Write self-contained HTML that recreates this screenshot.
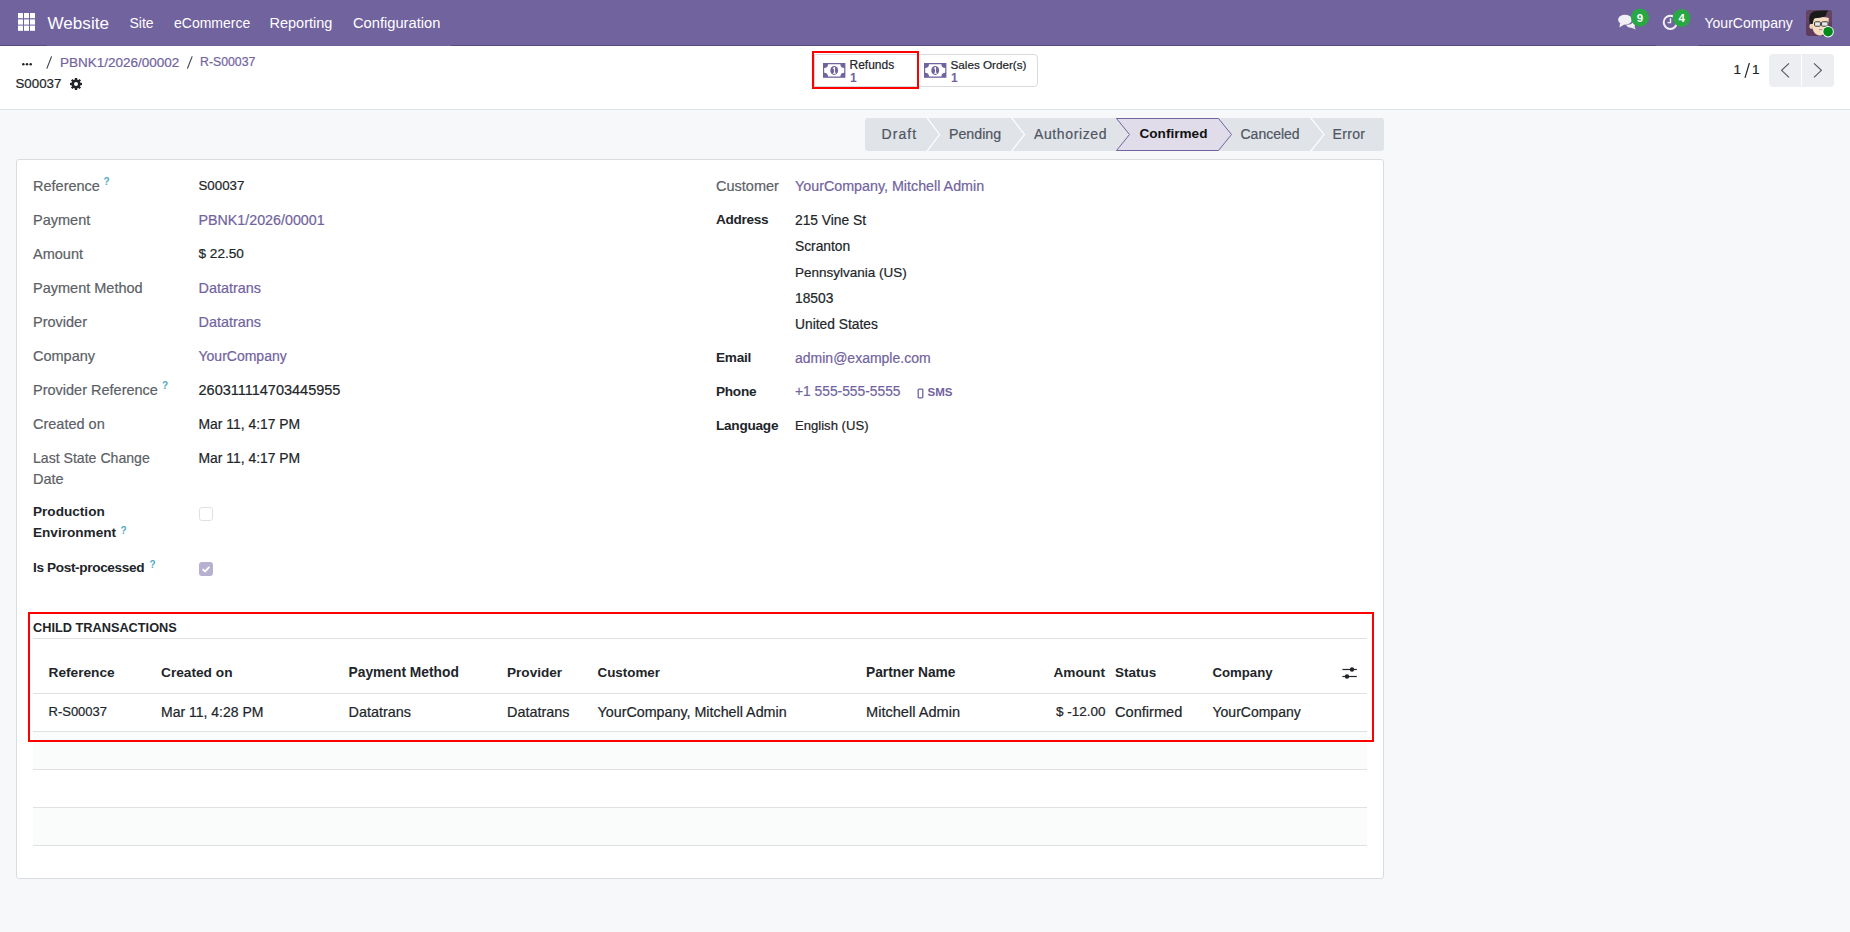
<!DOCTYPE html>
<html><head><meta charset="utf-8">
<style>
*{box-sizing:border-box;margin:0;padding:0}
html,body{width:1850px;height:932px;overflow:hidden;background:#f7f8fa;font-family:"Liberation Sans",sans-serif;color:#212529}
.a{position:absolute}
.t{position:absolute;white-space:nowrap;line-height:1;font-size:14px;-webkit-text-stroke:0.2px currentColor}
.b{-webkit-text-stroke:0}
.b{font-weight:700}
.lbl{color:#5c5f66;font-size:14.5px}
.val{color:#212529}
.lnk{color:#71639e}
.nav{position:absolute;left:0;top:0;width:1850px;height:46px;background:#71639e}
.nb{position:absolute;top:45px;height:1px;background:#584b82}
.nav .t{color:#fff;-webkit-text-stroke:0}
.cp{position:absolute;left:0;top:46px;width:1850px;height:64px;background:#fff;border-bottom:1px solid #dde1e5}
.sb{position:absolute;top:54px;height:33px;background:#fff;border:1px solid #d8dadd}
.q{position:absolute;color:#52a8c8;font-size:10px;line-height:1;font-weight:700}
.sheet{position:absolute;left:16px;top:159px;width:1368px;height:720px;background:#fff;border:1px solid #d9dde2;border-radius:3px}
.hl{position:absolute;left:33px;width:1334px;height:1px;background:#dfe1e5}
</style></head>
<body>
<!-- NAVBAR -->
<div class="nav">
  <div class="nb" style="left:0;width:47px"></div><div class="nb" style="left:451px;width:1205px"></div><div class="nb" style="left:1698px;width:102px"></div>
  <svg class="a" style="left:0;top:0" width="60" height="46">
    <g fill="#fff">
      <rect x="18" y="13" width="5" height="5.2"/><rect x="24" y="13" width="5" height="5.2"/><rect x="30" y="13" width="5" height="5.2"/>
      <rect x="18" y="19.4" width="5" height="5.2"/><rect x="24" y="19.4" width="5" height="5.2"/><rect x="30" y="19.4" width="5" height="5.2"/>
      <rect x="18" y="25.6" width="5" height="5.2"/><rect x="24" y="25.6" width="5" height="5.2"/><rect x="30" y="25.6" width="5" height="5.2"/>
    </g>
  </svg>
  <div class="t" style="left:47.5px;top:15px;font-size:17.1px">Website</div>
  <div class="t" style="left:129.5px;top:16px">Site</div>
  <div class="t" style="left:174px;top:16px">eCommerce</div>
  <div class="t" style="left:269.5px;top:16px;font-size:14.5px">Reporting</div>
  <div class="t" style="left:353px;top:16px;font-size:14.7px">Configuration</div>

  <!-- chat icon -->
  <svg class="a" style="left:1610px;top:0" width="90" height="46">
    <g fill="#f1eef6">
      <ellipse cx="15" cy="19.8" rx="6.9" ry="5"/>
      <path d="M10 23 L9.5 27.5 L14.5 24.2 Z"/>
      <path d="M16 24.8 Q21 25.2 23 22.5 Q25.8 24.5 24.5 27 L25.8 29.4 L21.5 27.8 Q17.5 28 16 24.8 Z"/>
    </g>
    <circle cx="30" cy="17.6" r="9.1" fill="#29a745"/>
    <text x="29.9" y="21.6" fill="#fff" font-family="Liberation Sans" font-size="11.5" font-weight="700" text-anchor="middle">9</text>
    <!-- clock -->
    <circle cx="60.3" cy="22.3" r="6.6" fill="none" stroke="#f3f0f7" stroke-width="2"/>
    <path d="M60.5 18.2 V22.6 H57.6" fill="none" stroke="#f3f0f7" stroke-width="1.4"/>
    <circle cx="71.6" cy="18" r="8.9" fill="#29a745"/>
    <text x="71.6" y="22" fill="#fff" font-family="Liberation Sans" font-size="11.5" font-weight="700" text-anchor="middle">4</text>
  </svg>
  <div class="t" style="left:1704.5px;top:16px;font-size:14px">YourCompany</div>
  <!-- avatar -->
  <svg class="a" style="left:1800px;top:4px" width="46" height="40">
    <defs><clipPath id="av"><rect x="6" y="6" width="26" height="26" rx="3"/></clipPath></defs>
    <rect x="6" y="6" width="26" height="26" rx="3" fill="#5e3c5b"/>
    <g clip-path="url(#av)">
      <rect x="6" y="6" width="26" height="13" fill="#6a4767" opacity="0.6"/>
      <path d="M11.8 15 Q11.2 25 14.8 29.2 Q17.8 32 21 31.4 Q26.2 29.5 28.2 23 L28.8 14 Q24 12.5 18 13.2 Z" fill="#f7dcc2"/>
      <ellipse cx="11.2" cy="22.3" rx="1.8" ry="2.6" fill="#f2d3b9"/>
      <path d="M9.6 19.8 Q8.4 12 11 9.2 Q14 6.4 19 6.8 Q24 6.3 28.2 6.5 Q27.6 8 26.6 8.6 Q27 10.6 25 12.4 Q20 14 14.6 14.2 Q12.9 15.8 12.7 20 Z" fill="#1a1a1a"/>
      <rect x="14.6" y="17.8" width="5.8" height="4.4" rx="0.8" fill="#e9e9e9" stroke="#3a3a3a" stroke-width="1"/>
      <rect x="21.6" y="17.8" width="6.4" height="4.4" rx="0.8" fill="#e9e9e9" stroke="#3a3a3a" stroke-width="1"/>
      <path d="M19 25.6 H22.4" stroke="#b98080" stroke-width="0.9"/>
    </g>
    <circle cx="28.1" cy="27.7" r="5.7" fill="#fff"/>
    <circle cx="28.1" cy="27.7" r="4.8" fill="#008a1a"/>
  </svg>
</div>

<!-- CONTROL PANEL -->
<div class="cp">
</div>
<svg class="a" style="left:18px;top:58px" width="20" height="10"><g fill="#212529"><circle cx="5.3" cy="6.2" r="1.25"/><circle cx="9" cy="6.2" r="1.25"/><circle cx="12.7" cy="6.2" r="1.25"/></g></svg>
<svg class="a" style="left:44px;top:54px" width="12" height="18"><path d="M2.8 14.6 L7.6 2.4" stroke="#3d4250" stroke-width="1.15"/></svg>
<div class="t lnk" style="left:60px;top:56px;font-size:13.5px">PBNK1/2026/00002</div>
<svg class="a" style="left:185px;top:54px" width="12" height="18"><path d="M2.4 14.6 L7.2 2.4" stroke="#3d4250" stroke-width="1.15"/></svg>
<div class="t lnk" style="left:200px;top:56px;font-size:12.3px">R-S00037</div>
<div class="t val" style="left:15.5px;top:77px;font-size:13.3px">S00037</div>
<svg class="a" style="left:68px;top:76px" width="16" height="16" viewBox="0 0 16 16">
  <g fill="#212529">
    <circle cx="8" cy="8" r="4.6"/>
    <rect x="6.8" y="2" width="2.4" height="12"/>
    <rect x="2" y="6.8" width="12" height="2.4"/>
    <rect x="6.8" y="2" width="2.4" height="12" transform="rotate(45 8 8)"/>
    <rect x="6.8" y="2" width="2.4" height="12" transform="rotate(-45 8 8)"/>
  </g>
  <circle cx="8" cy="8" r="2" fill="#fff"/>
</svg>

<!-- stat buttons -->
<div class="sb" style="left:917px;width:121px;border-radius:0 4px 4px 0"></div>
<div class="sb" style="left:814px;width:104px"></div>
<svg class="a" style="left:823px;top:63px" width="23" height="15" viewBox="0 0 23 15">
  <rect x="0" y="0" width="22.4" height="14.8" fill="#71639e"/>
  <path d="M5 1.2 H17.4 A3.8 3.8 0 0 0 21.2 5 V9.8 A3.8 3.8 0 0 0 17.4 13.6 H5 A3.8 3.8 0 0 0 1.2 9.8 V5 A3.8 3.8 0 0 0 5 1.2 Z" fill="#fff"/>
  <ellipse cx="11.2" cy="7.4" rx="3.9" ry="4.5" fill="#71639e"/>
  <path d="M9.9 5.4 L11.5 4.6 V9.9 M10 10.2 H13" stroke="#fff" stroke-width="1.1" fill="none"/>
</svg>
<div class="t val" style="left:849.5px;top:59px;font-size:12px">Refunds</div>
<div class="t lnk b" style="left:850px;top:72px;font-size:12px">1</div>
<svg class="a" style="left:924px;top:63px" width="23" height="15" viewBox="0 0 23 15">
  <rect x="0" y="0" width="22.4" height="14.8" fill="#71639e"/>
  <path d="M5 1.2 H17.4 A3.8 3.8 0 0 0 21.2 5 V9.8 A3.8 3.8 0 0 0 17.4 13.6 H5 A3.8 3.8 0 0 0 1.2 9.8 V5 A3.8 3.8 0 0 0 5 1.2 Z" fill="#fff"/>
  <ellipse cx="11.2" cy="7.4" rx="3.9" ry="4.5" fill="#71639e"/>
  <path d="M9.9 5.4 L11.5 4.6 V9.9 M10 10.2 H13" stroke="#fff" stroke-width="1.1" fill="none"/>
</svg>
<div class="t val" style="left:950.5px;top:58.5px;font-size:11.7px">Sales Order(s)</div>
<div class="t lnk b" style="left:951px;top:72px;font-size:12px">1</div>
<div class="a" style="left:812px;top:51px;width:107px;height:38px;border:2px solid #ff0000"></div>

<!-- pager -->
<div class="t val" style="left:1733.5px;top:63px;font-size:13.6px">1</div>
<svg class="a" style="left:1740.5px;top:60px" width="14" height="20"><path d="M4 17.8 L8.4 3" stroke="#212529" stroke-width="1.2"/></svg>
<div class="t val" style="left:1752px;top:63px;font-size:13.6px">1</div>
<div class="a" style="left:1769px;top:54px;width:32px;height:33px;background:#eceef1;border-radius:4px 0 0 4px"></div>
<div class="a" style="left:1802px;top:54px;width:32px;height:33px;background:#eceef1;border-radius:0 4px 4px 0"></div>
<svg class="a" style="left:1769px;top:54px" width="66" height="33">
  <path d="M20 9.3 L12.6 16.3 L20 23.3" fill="none" stroke="#50545c" stroke-width="1.1"/>
  <path d="M45 9.3 L52.4 16.3 L45 23.3" fill="none" stroke="#50545c" stroke-width="1.1"/>
</svg>

<!-- STATUSBAR -->
<svg class="a" style="left:865px;top:118px" width="520" height="34" viewBox="0 0 520 34">
  <defs><clipPath id="sbc"><rect x="0" y="0" width="519" height="33" rx="3"/></clipPath></defs>
  <g clip-path="url(#sbc)">
    <rect x="0" y="0" width="519" height="33" fill="#e0e4e8"/>
    <path d="M61.5 -1 L74.5 16.5 L61.5 34" fill="none" stroke="#fff" stroke-width="1.2"/>
    <path d="M146 -1 L159.5 16.5 L146 34" fill="none" stroke="#fff" stroke-width="1.2"/>
    <path d="M251.5 0.5 H353.5 L366.5 16.5 L353.5 32.5 H251.5 L264.5 16.5 Z" fill="#e0dcea" stroke="#71639e" stroke-width="1"/>
    <path d="M445 -1 L459 16.5 L445 34" fill="none" stroke="#fff" stroke-width="1.2"/>
  </g>
</svg>
<div class="t" style="left:881.5px;top:127px;font-size:14px;letter-spacing:1.1px;color:#4f5562">Draft</div>
<div class="t" style="left:949px;top:127px;font-size:14.2px;color:#4f5562">Pending</div>
<div class="t" style="left:1034px;top:127px;font-size:14px;letter-spacing:0.62px;color:#4f5562">Authorized</div>
<div class="t b" style="left:1139.5px;top:127px;font-size:13.6px;color:#111">Confirmed</div>
<div class="t" style="left:1240.5px;top:127px;font-size:14px;color:#4f5562">Canceled</div>
<div class="t" style="left:1332.5px;top:127px;font-size:14px;letter-spacing:0.35px;color:#4f5562">Error</div>

<!-- SHEET -->
<div class="sheet"></div>

<!-- left group -->
<div class="t lbl" style="left:33px;top:179px">Reference</div><div class="q" style="left:103.5px;top:177px">?</div>
<div class="t val" style="left:198.5px;top:179px;font-size:13.3px">S00037</div>
<div class="t lbl" style="left:33px;top:213px">Payment</div>
<div class="t lnk" style="left:198.5px;top:213px;font-size:14.27px">PBNK1/2026/00001</div>
<div class="t lbl" style="left:33px;top:247px">Amount</div>
<div class="t val" style="left:198.5px;top:247px;font-size:13.6px">$ 22.50</div>
<div class="t lbl" style="left:33px;top:281px">Payment Method</div>
<div class="t lnk" style="left:198.5px;top:281px;font-size:14.4px">Datatrans</div>
<div class="t lbl" style="left:33px;top:315px">Provider</div>
<div class="t lnk" style="left:198.5px;top:315px;font-size:14.4px">Datatrans</div>
<div class="t lbl" style="left:33px;top:349px">Company</div>
<div class="t lnk" style="left:198.5px;top:349px">YourCompany</div>
<div class="t lbl" style="left:33px;top:383px">Provider Reference</div><div class="q" style="left:162px;top:381px">?</div>
<div class="t val" style="left:198.5px;top:383px;font-size:14.5px">260311114703445955</div>
<div class="t lbl" style="left:33px;top:417px">Created on</div>
<div class="t val" style="left:198.5px;top:418px;font-size:13.9px">Mar 11, 4:17 PM</div>
<div class="t lbl" style="left:33px;top:451px;font-size:14.1px">Last State Change</div>
<div class="t lbl" style="left:33px;top:472px">Date</div>
<div class="t val" style="left:198.5px;top:452px;font-size:13.9px">Mar 11, 4:17 PM</div>
<div class="t b val" style="left:33px;top:505px;font-size:13.6px">Production</div>
<div class="t b val" style="left:33px;top:526px;font-size:13.6px">Environment</div><div class="q" style="left:120.5px;top:525.5px">?</div>
<div class="a" style="left:199px;top:507px;width:14px;height:14px;border:1px solid #dfe1e5;border-radius:3px;background:#fff"></div>
<div class="t b val" style="left:33px;top:560.5px;font-size:13.6px;letter-spacing:-0.35px">Is Post-processed</div><div class="q" style="left:149.5px;top:560px">?</div>
<svg class="a" style="left:199px;top:562px" width="14" height="14" viewBox="0 0 14 14">
  <rect x="0" y="0" width="14" height="14" rx="3" fill="#b7b0d1"/>
  <path d="M3.6 7.2 L6 9.4 L10.4 4.8" fill="none" stroke="#fff" stroke-width="1.8"/>
</svg>

<!-- right group -->
<div class="t lbl" style="left:716px;top:179px">Customer</div>
<div class="t lnk" style="left:795px;top:179px;font-size:14.3px">YourCompany, Mitchell Admin</div>
<div class="t b val" style="left:716px;top:212.5px;font-size:13.6px;letter-spacing:-0.3px">Address</div>
<div class="t val" style="left:795px;top:214px;font-size:13.8px">215 Vine St</div>
<div class="t val" style="left:795px;top:240px;font-size:13.8px">Scranton</div>
<div class="t val" style="left:795px;top:266px;font-size:13.5px">Pennsylvania (US)</div>
<div class="t val" style="left:795px;top:292px;font-size:13.8px">18503</div>
<div class="t val" style="left:795px;top:318px;font-size:13.8px">United States</div>
<div class="t b val" style="left:716px;top:350.5px;font-size:13.6px;letter-spacing:-0.25px">Email</div>
<div class="t lnk" style="left:795px;top:351px">admin@example.com</div>
<div class="t b val" style="left:716px;top:384.5px;font-size:13.6px;letter-spacing:-0.25px">Phone</div>
<div class="t lnk" style="left:795px;top:385px;font-size:13.8px">+1 555-555-5555</div>
<svg class="a" style="left:916px;top:387px" width="9" height="12" viewBox="0 0 9 12">
  <rect x="2.2" y="2.2" width="4.6" height="8.6" rx="0.8" fill="none" stroke="#71639e" stroke-width="1.3"/>
</svg>
<div class="t b lnk" style="left:927.5px;top:387px;font-size:11.5px">SMS</div>
<div class="t b val" style="left:716px;top:418.5px;font-size:13.6px;letter-spacing:-0.25px">Language</div>
<div class="t val" style="left:795px;top:419px;font-size:13.1px">English (US)</div>

<!-- CHILD TRANSACTIONS -->
<div class="t b val" style="left:33px;top:622px;font-size:12.75px">CHILD TRANSACTIONS</div>
<div class="hl" style="top:638px"></div>
<div class="t b val" style="left:48.5px;top:666px;font-size:13.7px">Reference</div>
<div class="t b val" style="left:161px;top:666px;font-size:13.7px">Created on</div>
<div class="t b val" style="left:348.5px;top:666px;font-size:13.8px">Payment Method</div>
<div class="t b val" style="left:507px;top:666px;font-size:13.6px">Provider</div>
<div class="t b val" style="left:597.5px;top:666px;font-size:13.4px">Customer</div>
<div class="t b val" style="left:866px;top:666px;font-size:13.75px">Partner Name</div>
<div class="t b val" style="left:1053.5px;top:666px;font-size:13.64px">Amount</div>
<div class="t b val" style="left:1115px;top:666px;font-size:13.5px">Status</div>
<div class="t b val" style="left:1212.5px;top:666px;font-size:13.2px">Company</div>
<svg class="a" style="left:1340px;top:664px" width="20" height="18" viewBox="0 0 20 18">
  <g stroke="#212529" stroke-width="1.2" fill="#212529">
    <path d="M2.4 5.5 H16.8"/><circle cx="12" cy="5.5" r="2.2" stroke="none"/>
    <path d="M2.4 12.5 H16.8"/><circle cx="7" cy="12.5" r="2.2" stroke="none"/>
  </g>
</svg>
<div class="hl" style="top:693px"></div>
<div class="t val" style="left:48.5px;top:705px;font-size:13px">R-S00037</div>
<div class="t val" style="left:161px;top:705px;font-size:14px">Mar 11, 4:28 PM</div>
<div class="t val" style="left:348.5px;top:705px;font-size:14.4px">Datatrans</div>
<div class="t val" style="left:507px;top:705px;font-size:14.4px">Datatrans</div>
<div class="t val" style="left:597.5px;top:705px;font-size:14.3px">YourCompany, Mitchell Admin</div>
<div class="t val" style="left:866px;top:705px;font-size:14.6px">Mitchell Admin</div>
<div class="t val" style="left:1056px;top:705px;font-size:13.5px">$ -12.00</div>
<div class="t val" style="left:1115px;top:705px;font-size:14.6px">Confirmed</div>
<div class="t val" style="left:1212.5px;top:705px">YourCompany</div>
<div class="hl" style="top:731px"></div>
<div class="a" style="left:33px;top:732px;width:1334px;height:37px;background:#fafbfb"></div>
<div class="hl" style="top:769px"></div>
<div class="hl" style="top:807px"></div>
<div class="a" style="left:33px;top:808px;width:1334px;height:37px;background:#fafbfb"></div>
<div class="hl" style="top:845px"></div>
<div class="a" style="left:28px;top:612px;width:1346px;height:130px;border:2px solid #ff0000"></div>
</body></html>
